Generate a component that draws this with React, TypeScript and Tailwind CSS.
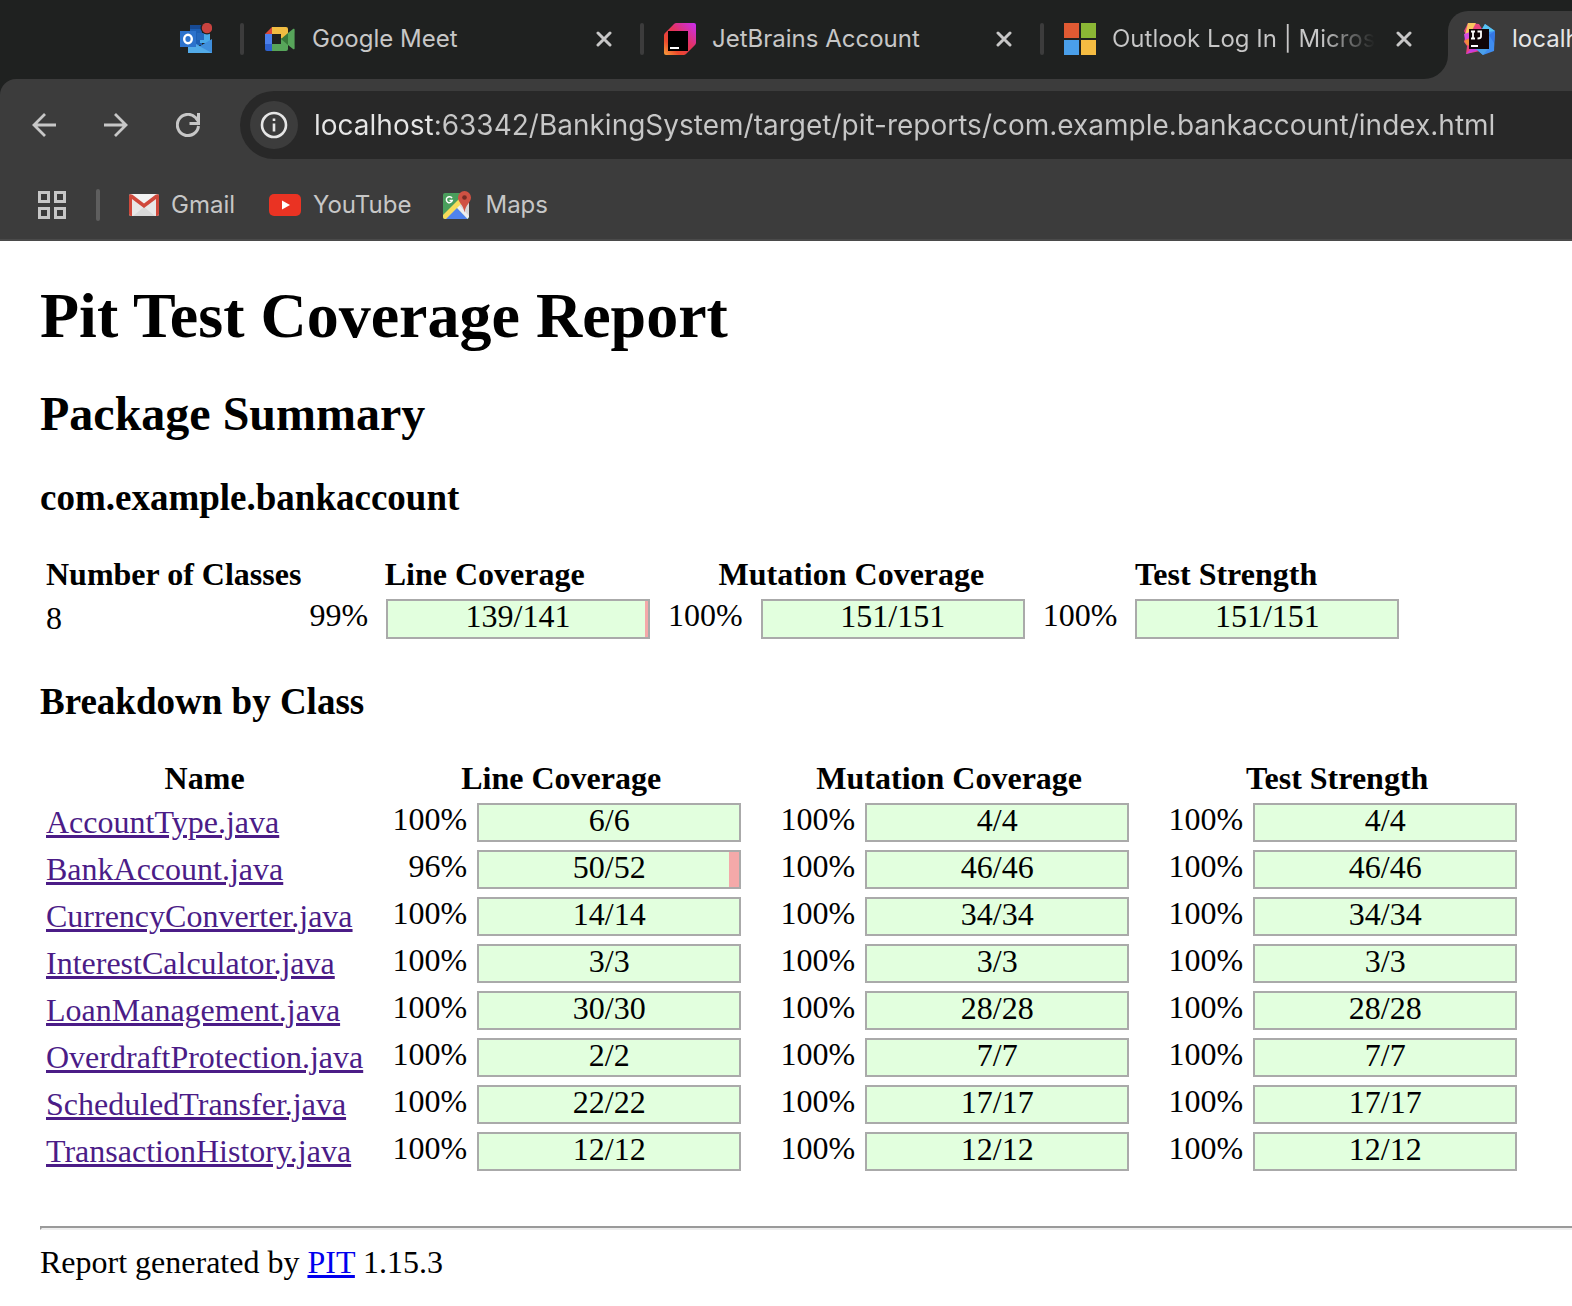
import React from "react";

const sans = "font-['Inter','Liberation_Sans',sans-serif]";
const serif = "font-['Liberation_Serif',serif]";

type Score = { pct: string; ratio: string; filled?: number };

const full = (ratio: string): Score => ({ pct: "100%", ratio });

const classes: { name: string; line: Score; mutation: Score; strength: Score }[] = [
  { name: "AccountType.java", line: full("6/6"), mutation: full("4/4"), strength: full("4/4") },
  { name: "BankAccount.java", line: { pct: "96%", ratio: "50/52", filled: 96 }, mutation: full("46/46"), strength: full("46/46") },
  { name: "CurrencyConverter.java", line: full("14/14"), mutation: full("34/34"), strength: full("34/34") },
  { name: "InterestCalculator.java", line: full("3/3"), mutation: full("3/3"), strength: full("3/3") },
  { name: "LoanManagement.java", line: full("30/30"), mutation: full("28/28"), strength: full("28/28") },
  { name: "OverdraftProtection.java", line: full("2/2"), mutation: full("7/7"), strength: full("7/7") },
  { name: "ScheduledTransfer.java", line: full("22/22"), mutation: full("17/17"), strength: full("17/17") },
  { name: "TransactionHistory.java", line: full("12/12"), mutation: full("12/12"), strength: full("12/12") },
];

function OutlookIcon() {
  return (
    <svg width="32" height="32" viewBox="0 0 32 32" aria-hidden="true">
      <path d="M10 2h12v20H10z" fill="#1d5fb4" />
      <path d="M10 2h12v4H10z" fill="#174a94" />
      <path d="M20 10h10v10H20z" fill="#4aa9e9" />
      <path d="M17 10h7v7h-7z" fill="#2468bd" />
      <path d="M8 16l12 7 12-7v14H8z" fill="#3f8fdc" />
      <path d="M8 17l24 13H8z" fill="#52abe8" />
      <rect y="8" width="16" height="16" fill="#2c72cc" />
      <ellipse cx="8" cy="16" rx="3.8" ry="4.2" fill="none" stroke="#fff" strokeWidth="2.4" />
      <circle cx="27" cy="5" r="6.5" fill="#1f2120" />
      <circle cx="27" cy="5" r="5.2" fill="#c8433f" />
    </svg>
  );
}

function MeetIcon() {
  return (
    <svg width="32" height="32" viewBox="0 0 32 32" aria-hidden="true">
      <path d="M8 4v7H1z" fill="#d9493a" />
      <path d="M1 11h7v10H1z" fill="#4c80ec" />
      <path d="M1 21h7v7H3a2 2 0 0 1-2-2z" fill="#2e62cf" />
      <path d="M8 4h14a2 2 0 0 1 2 2v6l-7 4v-5H8z" fill="#f1bd42" />
      <path d="M8 21h9v-5l7-4v14a2 2 0 0 1-2 2H8z" fill="#57a55a" />
      <path d="M17 16l7-6v12z" fill="#38783a" />
      <path d="M24 10l5-4c.8-.6 1.600-.2 1.600.8v18.400c0 1-.8 1.400-1.600.8l-5-4z" fill="#57a55a" />
    </svg>
  );
}

function JetBrainsIcon() {
  return (
    <svg width="32" height="32" viewBox="0 0 32 32" aria-hidden="true">
      <defs>
        <linearGradient id="jb" x1="0" y1="1" x2="1" y2="0">
          <stop offset="0" stopColor="#f7a23b" />
          <stop offset="0.25" stopColor="#ec4a2c" />
          <stop offset="0.55" stopColor="#e3335c" />
          <stop offset="1" stopColor="#c92df5" />
        </linearGradient>
      </defs>
      <path d="M13 0h17a2 2 0 0 1 2 2v17a4 4 0 0 1-1 3l-9 9a4 4 0 0 1-3 1H2a2 2 0 0 1-2-2V13a4 4 0 0 1 1-3l9-9a4 4 0 0 1 3-1z" fill="url(#jb)" />
      <path d="M4 8h20v20H4z" />
      <path d="M6 24h9v2H6z" fill="#fff" />
    </svg>
  );
}

function MicrosoftIcon() {
  return (
    <svg width="32" height="32" viewBox="0 0 32 32" aria-hidden="true">
      <path d="M0 0h15v15H0z" fill="#e05a33" />
      <path d="M17 0h15v15H17z" fill="#8bb735" />
      <path d="M0 17h15v15H0z" fill="#4a9fea" />
      <path d="M17 17h15v15H17z" fill="#f5bc42" />
    </svg>
  );
}

function IntelliJIcon() {
  return (
    <svg width="32" height="32" viewBox="0 0 32 32" aria-hidden="true">
      <path d="M4 0l11 1 3 5-2 22-14 3 1-8-3-4 2-7-2-4z" fill="#e8437f" />
      <path d="M4 0h8l-5 9-6 3z" fill="#f9c65f" />
      <path d="M0 11l6-2v6l-5 2z" fill="#d64be0" />
      <path d="M0 18l6-3v8l-3-1z" fill="#f08b3c" />
      <path d="M2 31l5-5h8l-3 2z" fill="#c73be0" />
      <path d="M21 1l10 7-1 20-11 4-7-6 6-20z" fill="#3f8df0" />
      <path d="M21 1l10 7-7 1-6-3z" fill="#57c3f2" />
      <path d="M25 12l6-4-1 12z" fill="#3577e4" />
      <path d="M12 26h12l-5 6z" fill="#4ba0ea" />
      <path d="M5 6h20v20H5z" fill="#100508" />
      <path d="M7 8.500h4M9 8.500v7M7 15.500h4M13.500 8.500h3.500v5c0 1.500-1 2-3.500 2" fill="none" stroke="#fff" strokeWidth="1.800" />
      <path d="M7 22h7v2H7z" fill="#fff" />
    </svg>
  );
}

function CloseIcon() {
  return (
    <svg width="16" height="16" viewBox="0 0 16 16" fill="none" stroke="#c7c7c7" strokeWidth="3" strokeLinecap="round" aria-hidden="true">
      <path d="M2 2l12 12M14 2L2 14" />
    </svg>
  );
}

function GmailIcon() {
  return (
    <svg width="30" height="22" viewBox="0 0 30 22" aria-hidden="true">
      <rect width="30" height="22" rx="2" fill="#e8e8e8" />
      <path d="M15 13l11 9H4z" fill="#d9d9d9" />
      <path d="M2 0h26L15 10z" fill="#f2f2f2" />
      <path d="M0 2C0 0 2-.3 3.500.8L15 9.500 26.500.8C28-.3 30 0 30 2v18a2 2 0 0 1-2 2h-1V5L15 14 3 5v17H2a2 2 0 0 1-2-2z" fill="#d0493c" />
    </svg>
  );
}

function YouTubeIcon() {
  return (
    <svg width="32" height="22" viewBox="0 0 32 22" aria-hidden="true">
      <rect width="32" height="22" rx="5" fill="#ea3323" />
      <path d="M13 6.500v9l8-4.500z" fill="#fff" />
    </svg>
  );
}

function MapsIcon() {
  return (
    <svg width="28" height="28" viewBox="0 0 28 28" aria-hidden="true">
      <rect y="2" width="26" height="26" rx="2" fill="#4a9e5c" />
      <path d="M14 16L26 4v22z" fill="#d8d8d8" />
      <path d="M1 28l12-12 12 12z" fill="#4f83ec" />
      <path d="M13 16l3-2 10 11v1l-1.500 2z" fill="#efefef" />
      <path d="M0 24L18 6l3 4L3 28H2a2 2 0 0 1-2-2z" fill="#f6dc5a" />
      <path d="M9 7.200A3 3 0 1 0 9.300 9.400H6.500" fill="none" stroke="#fff" strokeWidth="1.500" />
      <path d="M21.500 0a6.500 6.500 0 0 1 6.500 6.500c0 5-5.500 7-6.500 15-1-8-6.500-10-6.500-15A6.500 6.500 0 0 1 21.500 0z" fill="#cf5143" />
      <circle cx="21.500" cy="6.500" r="2.300" fill="#762c25" />
    </svg>
  );
}

function Tab({ icon, title, fade }: { icon: React.ReactNode; title: string; fade?: boolean }) {
  return (
    <div role="tab" aria-selected="false" className="flex w-[400px] shrink-0 items-center pr-7">
      <span className="h-8 w-1 rounded-sm bg-[#3c3c3c]" />
      <span className="ml-5">{icon}</span>
      <span
        className={
          fade
            ? "ml-4 whitespace-nowrap bg-linear-to-r from-[#c7c7c7] from-80% to-transparent bg-clip-text text-transparent"
            : "ml-4 whitespace-nowrap text-[#c7c7c7]"
        }
      >
        {title}
      </span>
      <button type="button" aria-label={`Close ${title}`} className="ml-auto">
        <CloseIcon />
      </button>
    </div>
  );
}

function TabStrip() {
  return (
    <div role="tablist" className="flex h-[79px] overflow-hidden bg-[#1f2120] pb-0.5 pl-[180px] text-[24px] leading-8">
      <div role="tab" aria-selected="false" aria-label="Outlook" className="flex w-[60px] shrink-0 items-center">
        <OutlookIcon />
      </div>
      <Tab icon={<MeetIcon />} title="Google Meet" />
      <Tab icon={<JetBrainsIcon />} title="JetBrains Account" />
      <Tab icon={<MicrosoftIcon />} title="Outlook Log In | Micros" fade />
      <div role="tab" aria-selected="true" className="relative mt-[11px] -mb-0.5 ml-2 flex w-[400px] shrink-0 items-center rounded-t-[20px] bg-[#3c3c3c] pb-[13px] pl-4 text-[#e6e6e6]">
        <svg width="24" height="24" viewBox="0 0 24 24" className="absolute bottom-0 -left-6" aria-hidden="true">
          <path d="M24 0v24H0A24 24 0 0 0 24 0z" fill="#3c3c3c" />
        </svg>
        <IntelliJIcon />
        <span className="ml-4 whitespace-nowrap">localhost:63342</span>
      </div>
    </div>
  );
}

function Toolbar() {
  return (
    <div className="bg-[#1f2120]">
      <div className="flex items-center rounded-tl-2xl bg-[#3c3c3c] pt-3 pl-8">
        <div className="flex items-center gap-12">
          <button type="button" aria-label="Back">
            <svg width="24" height="24" viewBox="0 0 24 24" fill="none" stroke="#c7c7c7" strokeWidth="2.800" aria-hidden="true">
              <path d="M24 12H2M13 1L2 12l11 11" />
            </svg>
          </button>
          <button type="button" aria-label="Forward">
            <svg width="24" height="24" viewBox="0 0 24 24" fill="none" stroke="#c7c7c7" strokeWidth="2.800" aria-hidden="true">
              <path d="M0 12h22M11 1l11 11-11 11" />
            </svg>
          </button>
          <button type="button" aria-label="Reload">
            <svg width="24" height="24" viewBox="0 0 24 24" fill="none" stroke="#c7c7c7" strokeWidth="3" aria-hidden="true">
              <path d="M22.500 13A10.600 10.600 0 1 1 19.500 4.500L22 8" />
              <path d="M22.500 0v10.500H13.500" />
            </svg>
          </button>
        </div>
        <div className="ml-10 flex h-[68px] flex-1 items-center rounded-l-full bg-[#282828] pl-[10px]">
          <button type="button" aria-label="View site information" className="flex size-12 shrink-0 items-center justify-center rounded-full bg-[#3c3c3c]">
            <svg width="28" height="28" viewBox="0 0 28 28" fill="none" stroke="#e6e6e6" strokeWidth="2.600" aria-hidden="true">
              <circle cx="14" cy="14" r="12" />
              <path d="M14 12.500v8M14 7.500v2.600" />
            </svg>
          </button>
          <input
            aria-label="Address"
            readOnly
            value="localhost:63342/BankingSystem/target/pit-reports/com.example.bankaccount/index.html"
            className="ml-4 min-w-0 flex-1 bg-linear-to-r from-[#e6e6e6] from-[120px] to-[#c7c7c7] to-[120px] bg-clip-text text-[28px] leading-9 text-transparent outline-none"
          />
        </div>
      </div>
    </div>
  );
}

function BookmarksBar() {
  return (
    <nav aria-label="Bookmarks" className="flex h-[82px] items-center border-b-2 border-[#4a4a4a] bg-[#3c3c3c] pt-3 pl-[38px] text-[24px] leading-8 text-[#c7c7c7]">
      <button type="button" aria-label="Apps">
        <svg width="28" height="28" viewBox="0 0 28 28" fill="none" stroke="#c7c7c7" strokeWidth="3" aria-hidden="true">
          <path d="M1.500 1.500h9v9h-9zM17.500 1.500h9v9h-9zM1.500 17.500h9v9h-9zM17.500 17.500h9v9h-9z" />
        </svg>
      </button>
      <span className="ml-[30px] h-8 w-1 rounded-sm bg-[#5e5e5e]" />
      <a href="#gmail" className="ml-[29px] flex items-center gap-3">
        <GmailIcon />
        Gmail
      </a>
      <a href="#youtube" className="ml-[34px] flex items-center gap-3">
        <YouTubeIcon />
        YouTube
      </a>
      <a href="#maps" className="ml-8 flex items-center gap-[14px]">
        <MapsIcon />
        Maps
      </a>
    </nav>
  );
}

function Bar({ score, tall }: { score: Score; tall?: boolean }) {
  return (
    <div className={`${tall ? "h-10" : "h-[39px]"} relative w-[264px] border-2 border-[#aaaaaa] bg-[#f4a9a9] text-center leading-[30px]`}>
      <div className="absolute inset-y-0 left-0 bg-[#e2ffde]" style={{ width: `${score.filled ?? 100}%` }} />
      <span className="relative">{score.ratio}</span>
    </div>
  );
}

function SummaryCell({ score }: { score: Score }) {
  return (
    <td className="pt-px pr-3 pb-[3px] pl-[2px] align-top">
      <div className="flex gap-[18px]">
        <span className="leading-8">{score.pct}</span>
        <Bar score={score} tall />
      </div>
    </td>
  );
}

function BreakdownCell({ score }: { score: Score }) {
  return (
    <td className="pt-px pr-3 pb-[3px] pl-[2px] align-top">
      <div className="flex gap-[10px]">
        <span className="w-24 text-right leading-8">{score.pct}</span>
        <Bar score={score} />
      </div>
    </td>
  );
}

function Heads({ titles }: { titles: string[] }) {
  return (
    <thead>
      <tr>
        {titles.map((t) => (
          <th key={t} scope="col" className="p-[2px] text-center font-bold">
            {t}
          </th>
        ))}
      </tr>
    </thead>
  );
}

export default function App() {
  return (
    <div className="min-h-screen overflow-x-hidden bg-white">
      <header className={sans}>
        <TabStrip />
        <Toolbar />
        <BookmarksBar />
      </header>
      <main className={`${serif} pt-[38px] pl-10 text-[32px] leading-9 text-black`}>
        <h1 className="text-[64px] leading-[74px] font-bold">Pit Test Coverage Report</h1>
        <h2 className="mt-[33px] text-[48px] leading-[56px] font-bold">Package Summary</h2>
        <h3 className="mt-[35px] text-[37px] leading-[42px] font-bold">com.example.bankaccount</h3>
        <table className="mt-[31px] border-separate border-spacing-1 whitespace-nowrap">
          <Heads titles={["Number of Classes", "Line Coverage", "Mutation Coverage", "Test Strength"]} />
          <tbody>
            <tr>
              <td className="px-[2px] pt-[2px] align-top">8</td>
              <SummaryCell score={{ pct: "99%", ratio: "139/141", filled: 99 }} />
              <SummaryCell score={full("151/151")} />
              <SummaryCell score={full("151/151")} />
            </tr>
          </tbody>
        </table>
        <h3 className="mt-[35px] text-[37px] leading-[42px] font-bold">Breakdown by Class</h3>
        <table className="mt-[31px] border-separate border-spacing-1 whitespace-nowrap">
          <Heads titles={["Name", "Line Coverage", "Mutation Coverage", "Test Strength"]} />
          <tbody>
            {classes.map((c) => (
              <tr key={c.name}>
                <td className="px-[2px] pt-[2px] align-top">
                  <a href={`#${c.name}`} className="text-[#4b1c87] underline">
                    {c.name}
                  </a>
                </td>
                <BreakdownCell score={c.line} />
                <BreakdownCell score={c.mutation} />
                <BreakdownCell score={c.strength} />
              </tr>
            ))}
          </tbody>
        </table>
        <hr className="mt-12 border-t-2 border-b-2 border-l-2 border-t-[#9a9a9a] border-b-[#eeeeee] border-l-[#9a9a9a]" />
        <p className="mt-[14px]">
          Report generated by{" "}
          <a href="#pit" className="text-[#0000ee] underline">
            PIT
          </a>{" "}
          1.15.3
        </p>
      </main>
    </div>
  );
}
